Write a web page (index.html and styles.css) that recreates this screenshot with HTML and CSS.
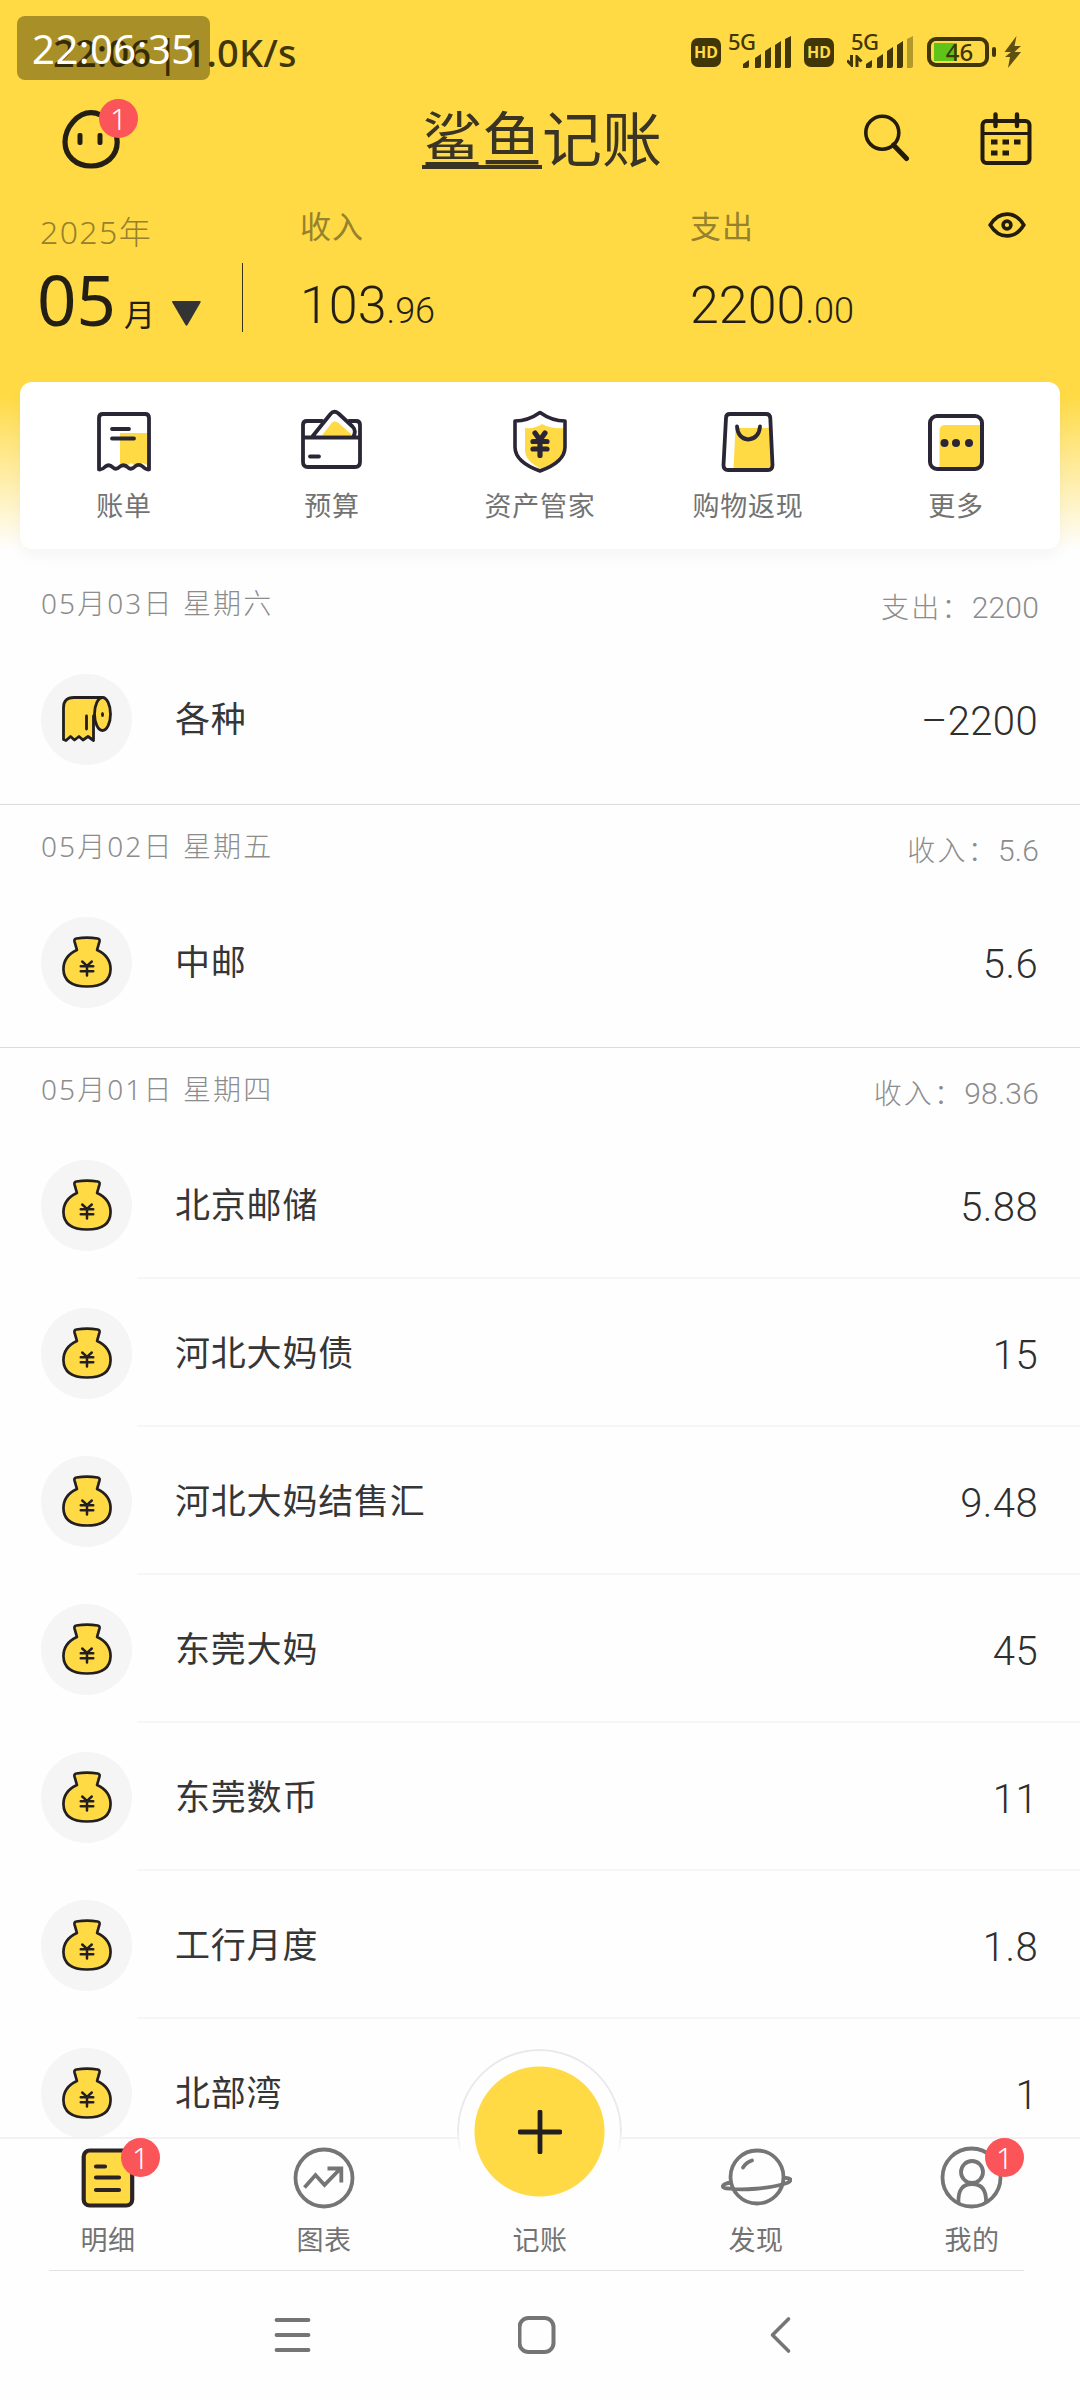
FILE: index.html
```html
<!DOCTYPE html>
<html lang="zh-CN">
<head>
<meta charset="utf-8">
<title>鲨鱼记账</title>
<link rel="stylesheet" href="styles.css">
</head>
<body>
<svg class="defs" aria-hidden="true">
  <symbol id="moneybag" viewBox="0 0 52 54">
    <path d="M13 5.5 Q12.4 3 15 2.6 Q26 .8 37 2.6 Q39.6 3 39 5.5 L36.500 14.500 Q50.500 21 50.500 34.500 Q50 52.500 26 52.500 Q2 52.500 1.500 34.500 Q1.500 21 15.500 14.500 Z" fill="#ffda44" stroke="#231f20" stroke-width="2.800" stroke-linejoin="round"/>
    <path d="M21 26.500L26 31L31 26.500M19.500 31.500H32.500M19.500 36.700H32.500M26 31V41" fill="none" stroke="#231f20" stroke-width="2.600" stroke-linecap="round"/>
  </symbol>
</svg>
<div class="screen">
  <header class="top">
    <div class="status">
      <span class="net">22:06 | 1.0K/s</span>
      <div class="status-icons">
        <span class="hd">HD</span>
        <div class="signal">
          <span class="gen">5G</span>
          <svg width="50" height="32" fill="#403608"><path d="M0 32V28L6 24V30Q6 32 4 32ZM12 32V22L18 18V30Q18 32 16 32ZM22 32V15L28 11V30Q28 32 26 32ZM32 32V9L38 5V30Q38 32 36 32ZM42 32V3L48 0V30Q48 32 46 32Z"/></svg>
        </div>
        <span class="hd hd-two">HD</span>
        <div class="signal signal-two">
          <span class="gen">5G</span>
          <svg class="updown" width="16" height="12"><path d="M0 5.500L4.500 10V0M10 12V2L14.500 6.500" fill="none" stroke="#403608" stroke-width="3"/></svg>
          <svg width="50" height="32" fill="#403608"><path d="M0 32V28L6 24V30Q6 32 4 32ZM11 32V22L17 18V30Q17 32 15 32ZM21 32V15L27 11V30Q27 32 25 32ZM31 32V9L37 5V30Q37 32 35 32Z"/><path d="M41 32V3L47 0V30Q47 32 45 32Z" opacity=".4"/></svg>
        </div>
        <div class="battery"><span>46</span></div>
        <svg class="bolt" width="18" height="32" fill="#5e5013"><path d="M12.500 0L.5 16H7L1 21H6L4 32L17 16H10.500L17 10H10.500Z"/></svg>
      </div>
      <div class="clock">22:06:35</div>
    </div>

    <div class="titlebar">
      <div class="face">
        <svg width="58" height="59" viewBox="0 0 58 59"><path d="M29 2.700C42 2.700 55.200 17 55.200 32C55.200 46 44 56 29 56C14 56 3 46 3 32C3 17 16 2.700 29 2.700Z" fill="none" stroke="#231f14" stroke-width="5.200"/><rect x="15.500" y="23" width="5" height="12" rx="2" fill="#231f14"/><rect x="35.500" y="23" width="5" height="12" rx="2" fill="#231f14"/></svg>
        <span class="badge">1</span>
      </div>
      <h1 class="brand"><span class="shark">鲨鱼</span>记账</h1>
      <div class="actions">
        <svg width="48" height="50" viewBox="0 0 48 50" fill="none" stroke="#231c0c"><circle cx="20.300" cy="18.700" r="16.500" stroke-width="3.600"/><path d="M31.500 31L44.500 44.500" stroke-width="5" stroke-linecap="round"/></svg>
        <svg width="52" height="54" viewBox="0 0 52 54" fill="none" stroke="#231c0c" stroke-width="4"><rect x="2.500" y="9" width="47" height="42" rx="4"/><path d="M3 21.500H49" stroke-width="3"/><path d="M15.500 2.500V14M37 2.500V14" stroke-linecap="round" stroke-width="4.400"/><path d="M11 30H17.500M22.500 30H29M34 30H40.500M11 41H17.500M22.500 41H29" stroke-width="5"/></svg>
      </div>
    </div>

    <div class="summary">
      <div class="month">
        <div class="year">2025年</div>
        <div class="month-row"><span class="month-num">05</span><span class="month-unit">月</span><svg width="29" height="25"><path d="M0 1Q0 0 1 0H28Q29 0 28.500 1.500L15.500 24Q14.500 25.500 13.500 24Z" fill="#333"/></svg></div>
      </div>
      <i class="rule"></i>
      <div class="total income"><span class="label">收入</span><span class="sum">103<small>.96</small></span></div>
      <div class="total"><span class="label">支出</span><span class="sum">2200<small>.00</small></span></div>
      <svg class="eye" width="38" height="26" viewBox="0 0 38 26" fill="none" stroke="#231c0c" stroke-width="3.600"><path d="M2.200 13C11-1.500 27-1.500 35.800 13C27 27.500 11 27.500 2.200 13Z"/><circle cx="19" cy="13" r="3.900"/></svg>
    </div>
  </header>

  <nav class="quick">
    <a><svg width="66" height="66" viewBox="0 0 66 66" fill="none" stroke="#2a2636" stroke-width="3.800" stroke-linecap="round" stroke-linejoin="round"><path d="M29 24H58V57L52 54L46 58L40 54L34 58L29 56Z" fill="#ffda44" stroke="none"/><path d="M8 60.500V9Q8 5 12 5H54Q58 5 58 9V60.500Q55 61 51 57Q47 54.500 44 57.500Q40 61.500 37 58.500Q33 54.500 29 57.500Q25 61.500 22 58.500Q18 54.500 14.500 57.500Q11 61 8 60.500Z"/><path d="M21 20H38M21 29.500H43"/></svg><span>账单</span></a>
    <a><svg width="66" height="66" viewBox="0 0 66 66" fill="none" stroke="#2a2636" stroke-width="3.800" stroke-linecap="round" stroke-linejoin="round"><path d="M23 26.500L33 13.500Q36 11.500 39 13.500L52 25V26.500Z" fill="#ffda44" stroke="none"/><path d="M23 12H8Q4 12 4 16V53Q4 58 9 58H56Q61 58 61 53V16Q61 12 57 12H50M4 28.500H61M13 28L31.500 5Q35 1 39.500 4.500L53.500 17.500Q58 22 54 28M11 47.500H20"/></svg><span>预算</span></a>
    <a><svg width="66" height="66" viewBox="0 0 66 66" fill="none" stroke="#2a2636" stroke-width="3.600" stroke-linecap="round" stroke-linejoin="round"><path d="M18 19Q28 20 35 15Q43 20 58 19V38Q57 52 36 61Q17 52 18 40Z" fill="#ffda44" stroke="none"/><path d="M33 3.500Q21 12 8 12V38Q8 53 33 62Q58 53 58 38V12Q45 12 33 3.500Z"/><path d="M28 24L33 31L38 24M26 32.500H40M26 40H40M33 32V46.500" stroke-width="5.200"/></svg><span>资产管家</span></a>
    <a><svg width="66" height="66" viewBox="0 0 66 66" fill="none" stroke="#2a2636" stroke-width="3.800" stroke-linecap="round" stroke-linejoin="round"><path d="M20.500 19H55L57 60H18.500Z" fill="#ffda44" stroke="none"/><path d="M15 5H51Q55 5 55.300 9L57.500 56Q57.500 61 53 61H13Q8.500 61 8.500 56L11 9Q11 5 15 5Z"/><path d="M22 17.500Q23 29.500 33 30.500Q44 29.500 45 17.500"/></svg><span>购物返现</span></a>
    <a><svg width="66" height="66" viewBox="0 0 66 66"><path d="M16.500 22Q16.500 16 22 16H57V59H16.500Z" fill="#ffda44"/><rect x="7" y="7" width="52" height="53" rx="7" fill="none" stroke="#2a2636" stroke-width="4"/><g fill="#2a2636"><circle cx="21.500" cy="34" r="4"/><circle cx="33" cy="34" r="4"/><circle cx="46" cy="34" r="4"/></g></svg><span>更多</span></a>
  </nav>

  <main class="list">
    <section class="day">
      <div class="day-head"><span>05月03日 星期六</span><span class="day-sum">支出：<b>2200</b></span></div>
      <div class="row"><span class="ico"><svg width="50" height="46" viewBox="0 0 50 46" fill="#ffda44" stroke="#231f20" stroke-width="2.800" stroke-linejoin="round" stroke-linecap="round"><path d="M40 1.500H12Q1.500 1.500 1.500 12V43.500L4 44.500L8.500 40.500L12.500 44L17 40.500L21 44L26 40.500L31.500 44.500V20"/><ellipse cx="40.500" cy="18" rx="8" ry="16.500"/><ellipse cx="40.500" cy="18.500" rx=".4" ry="1.500" stroke-width="2.200"/><path d="M24.500 20V33"/></svg></span><span class="name">各种</span><span class="amt">–2200</span></div>
    </section>
    <section class="day">
      <div class="day-head"><span>05月02日 星期五</span><span class="day-sum">收入：<b>5.6</b></span></div>
      <div class="row"><span class="ico"><svg class="bag"><use href="#moneybag"/></svg></span><span class="name">中邮</span><span class="amt">5.6</span></div>
    </section>
    <section class="day">
      <div class="day-head"><span>05月01日 星期四</span><span class="day-sum">收入：<b>98.36</b></span></div>
      <div class="row"><span class="ico"><svg class="bag"><use href="#moneybag"/></svg></span><span class="name">北京邮储</span><span class="amt">5.88</span></div>
      <div class="row"><span class="ico"><svg class="bag"><use href="#moneybag"/></svg></span><span class="name">河北大妈债</span><span class="amt">15</span></div>
      <div class="row"><span class="ico"><svg class="bag"><use href="#moneybag"/></svg></span><span class="name">河北大妈结售汇</span><span class="amt">9.48</span></div>
      <div class="row"><span class="ico"><svg class="bag"><use href="#moneybag"/></svg></span><span class="name">东莞大妈</span><span class="amt">45</span></div>
      <div class="row"><span class="ico"><svg class="bag"><use href="#moneybag"/></svg></span><span class="name">东莞数币</span><span class="amt">11</span></div>
      <div class="row"><span class="ico"><svg class="bag"><use href="#moneybag"/></svg></span><span class="name">工行月度</span><span class="amt">1.8</span></div>
      <div class="row"><span class="ico"><svg class="bag"><use href="#moneybag"/></svg></span><span class="name">北部湾</span><span class="amt">1</span></div>
    </section>
  </main>

  <nav class="tabs">
    <a><span class="tab-ico"><svg width="70" height="64" viewBox="0 0 70 64" fill="none" stroke="#2b2326" stroke-width="4.200" stroke-linecap="round"><rect x="10.700" y="4.500" width="48.500" height="55" rx="6" fill="#ffda44"/><path d="M23 20.500H32M23 31.500H46M23 44H46"/></svg><span class="badge">1</span></span><span>明细</span></a>
    <a><span class="tab-ico"><svg width="70" height="64" viewBox="0 0 70 64" fill="none" stroke="#757575" stroke-width="3.800"><circle cx="35" cy="32" r="28.500"/><path d="M15.500 41.500L26.500 29L35.500 39L52 22M38.500 22.500H52.300V36.500"/></svg></span><span>图表</span></a>
    <a class="add"><span class="plus"><svg width="44" height="44" viewBox="0 0 44 44"><path d="M2 22H42M22 2V42" stroke="#231f20" stroke-width="4.800" stroke-linecap="round"/></svg></span><span>记账</span></a>
    <a><span class="tab-ico"><svg width="72" height="64" viewBox="0 0 72 64" fill="none" stroke="#757575" stroke-width="3.800" stroke-linecap="round"><circle cx="37" cy="31" r="26.500"/><path d="M23 21.500Q26 16.500 32 14.500"/><path d="M11 36.500C1 38 0 42.500 9 42.500C22 45 50 42 62 38.500C73 36 73 31.500 64 32"/></svg></span><span>发现</span></a>
    <a><span class="tab-ico"><svg width="70" height="64" viewBox="0 0 70 64" fill="none" stroke="#757575" stroke-width="3.800"><circle cx="34.500" cy="31.500" r="29"/><circle cx="35" cy="26" r="11"/><path d="M21.500 57Q20.500 38 35 38Q50 38 49 57"/></svg><span class="badge">1</span></span><span>我的</span></a>
  </nav>

  <footer class="sysnav">
    <svg width="38" height="38" viewBox="0 0 38 38" stroke="#757575" stroke-width="3.800" stroke-linecap="round"><path d="M2.500 4H34.500M2.500 19H34.500M2.500 34H34.500"/></svg>
    <svg width="38" height="38" viewBox="0 0 38 38"><rect x="1.500" y="2" width="34" height="34" rx="9" fill="none" stroke="#757575" stroke-width="4"/></svg>
    <svg width="38" height="38" viewBox="0 0 38 38" fill="none" stroke="#757575" stroke-width="3.600" stroke-linecap="round" stroke-linejoin="round"><path d="M26.500 3L10.500 19L26.500 35"/></svg>
  </footer>
</div>
</body>
</html>
```
FILE: styles.css
```css
* { box-sizing: border-box; }
body {
  margin: 0;
  font-family: "Noto Sans", "Noto Sans CJK SC", sans-serif;
  color: #2f2f2f;
  background: #fff;
}
svg { display: block; flex: none; }
.defs { position: absolute; width: 0; height: 0; }
.screen {
  display: flex;
  flex-direction: column;
  width: 1080px;
  height: 2400px;
  overflow: hidden;
  background: linear-gradient(#ffda44 0 395px, #fefefe 550px);
}
.top { height: 382px; flex: none; color: #231f14; }

/* status bar */
.status {
  position: relative;
  display: flex;
  align-items: center;
  justify-content: space-between;
  height: 104px;
  padding: 0 58px 0 53px;
  color: #403608;
}
.net { font-size: 38px; line-height: 40px; font-weight: 500; letter-spacing: .2px; word-spacing: -4px; white-space: pre; }
.status-icons { display: flex; align-items: center; height: 32px; }
.hd {
  width: 30px;
  height: 29px;
  border-radius: 7px;
  background: #403608;
  color: #ffda44;
  font: 700 16px/29px "Noto Sans", sans-serif;
  text-align: center;
}
.signal { position: relative; margin-left: 22px; }
.gen { position: absolute; left: -15px; top: -6px; font: 500 22px/22px "Noto Sans", sans-serif; letter-spacing: -.5px; }
.hd-two { margin-left: 11px; }
.signal-two { margin-left: 32px; }
.updown { position: absolute; left: -19px; top: 19px; }
.battery {
  position: relative;
  width: 62px;
  height: 30px;
  margin-left: 11px;
  padding-left: 3px;
  border: 4px solid #403608;
  border-radius: 9px;
  background: linear-gradient(#5fc41a, #5fc41a) 3px 2px / 23px 18px no-repeat;
  font: 500 24px/22px "Noto Sans", sans-serif;
  text-align: center;
}
.battery::after { content: ""; position: absolute; right: -11px; top: 6px; width: 4px; height: 10px; border-radius: 2px; background: #403608; }
.bolt { margin-left: 15px; }
.clock {
  position: absolute;
  left: 17px;
  top: 16px;
  width: 193px;
  height: 64px;
  padding-left: 15px;
  border-radius: 8px;
  background: rgba(40, 30, 0, .4);
  color: #fff;
  font-size: 40px;
  line-height: 65px;
  letter-spacing: .5px;
}

/* title row */
.titlebar { display: flex; align-items: center; justify-content: space-between; height: 70px; padding: 0 48px 0 62px; }
.face { position: relative; width: 160px; }
.badge {
  position: absolute;
  width: 39px;
  height: 39px;
  border-radius: 50%;
  background: #fb5459;
  color: #fff;
  font: 300 30px/39px "Noto Sans", sans-serif;
  text-align: center;
}
.face .badge { left: 37px; top: -11px; }
.brand { display: flex; margin: 0; font-size: 60px; line-height: 60px; font-weight: 400; color: #3a3424; }
.shark { border-bottom: 4px solid #3a3424; height: 60px; }
.actions { display: flex; align-items: center; gap: 70px; }

/* month and totals */
.summary { display: flex; height: 208px; padding-right: 54px; }
.summary > * { flex: none; }
.month { width: 242px; padding: 40px 0 0 37px; }
.year { padding-left: 3px; font-size: 32px; line-height: 36px; letter-spacing: 1.4px; color: #96812e; font-weight: 300; }
.month-row { display: flex; align-items: baseline; margin-top: 4px; line-height: 90px; }
.month-num { font-size: 69px; width: 87px; }
.month-unit { font-size: 31px; width: 48px; }
.rule { width: 1px; height: 69px; margin-top: 89px; background: #3a3216; }
.total { display: flex; flex-direction: column; width: 280px; padding-top: 31px; }
.income { width: 447px; padding-left: 57px; }
.label { font-size: 31px; line-height: 42px; letter-spacing: 1px; color: #96812e; }
.sum { margin-top: 29px; font: 300 52px/60px Roboto, sans-serif; }
.sum small { font-size: 36px; }
.eye { margin: 38px 0 0 auto; }

/* shortcuts */
.quick {
  display: flex;
  flex: none;
  height: 167px;
  margin: 0 20px;
  border-radius: 12px;
  background: #fff;
  box-shadow: 0 8px 16px rgba(0, 0, 0, .035);
}
.quick a { flex: 1; display: flex; flex-direction: column; align-items: center; padding-top: 27px; }
.quick span { margin-top: 13px; font-size: 27px; line-height: 36px; letter-spacing: .7px; color: #737373; }

/* entries */
.list { flex: 1; min-height: 0; padding-top: 13px; overflow: hidden; }
.day { padding-bottom: 11px; border-bottom: 1px solid #dcdcdc; }
.day-head { display: flex; justify-content: space-between; height: 83px; padding: 0 41px; line-height: 83px; font-size: 28px; letter-spacing: 2.1px; color: #8c8c8c; font-weight: 300; }
.day-sum { font-size: 28px; letter-spacing: 2.2px; line-height: 90px; }
.day-sum b { font: 300 30px Roboto, sans-serif; letter-spacing: .2px; }
.row { display: flex; align-items: center; height: 148px; padding: 0 41px; background: linear-gradient(#f6f6f6, #f6f6f6) 137px 100% / 943px 2px no-repeat; }
.row:last-child { background: none; }
.ico { display: flex; align-items: center; justify-content: center; width: 91px; height: 91px; border-radius: 50%; background: #f5f5f5; }
.bag { width: 50px; height: 54px; }
.name { flex: 1; padding-left: 43px; font-size: 35px; line-height: 50px; letter-spacing: .8px; color: #363636; }
.amt { padding: 5px 1px 0 0; font: 300 40px/46px Roboto, sans-serif; letter-spacing: .4px; }

/* tab bar */
.tabs { position: relative; display: flex; flex: none; height: 133px; border-top: 2px solid #f1f1f1; background: #fefefe; }
.tabs::after { content: ""; position: absolute; left: 49px; right: 56px; bottom: -1px; height: 1px; background: #e2e2e2; }
.tabs a { display: flex; flex: 1; flex-direction: column; align-items: center; padding-top: 7px; font-size: 27px; line-height: 36px; letter-spacing: .5px; color: #737373; }
.tab-ico { position: relative; height: 64px; margin-bottom: 12px; }
.tabs .badge { left: 48px; top: -8px; letter-spacing: 0; }
.tabs .add { position: relative; padding-top: 83px; }
.plus {
  position: absolute;
  left: 25px;
  top: -90px;
  width: 165px;
  height: 165px;
  display: flex;
  align-items: center;
  justify-content: center;
  border-radius: 50%;
  background: radial-gradient(circle, #ffda44 64.500px, #fefefe 65.500px);
}
.plus::before { content: ""; position: absolute; inset: 0; border: 2px solid #e9e9ed; border-radius: 50%; mask-image: linear-gradient(#000 80px, transparent 106px); }

/* system navigation */
.sysnav { display: flex; flex: none; align-items: center; justify-content: center; gap: 206px; height: 130px; padding-right: 7px; background: #fefefe; }
```
